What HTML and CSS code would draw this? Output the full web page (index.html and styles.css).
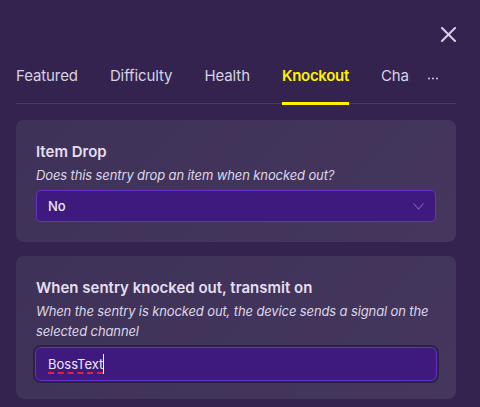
FILE: index.html
```html
<!DOCTYPE html>
<html>
<head>
<meta charset="utf-8">
<link rel="stylesheet" href="styles.css">
</head>
<body>
<div class="page">
  <div class="topbar">
    <svg class="close" width="15" height="15" viewBox="0 0 15 15"><path d="M1 1L14 14M14 1L1 14" stroke="#d6d0e2" stroke-width="2" stroke-linecap="square"/></svg>
  </div>
  <div class="tabbar">
    <div class="tabs">
      <div class="tab">Featured</div>
      <div class="tab">Difficulty</div>
      <div class="tab">Health</div>
      <div class="tab active">Knockout</div>
      <div class="tab">Channels</div>
    </div>
    <div class="more">
      <svg width="10" height="3" viewBox="0 0 10 3"><circle cx="1" cy="1.5" r="1" fill="#d6d0e2"/><circle cx="5" cy="1.5" r="1" fill="#d6d0e2"/><circle cx="9" cy="1.5" r="1" fill="#d6d0e2"/></svg>
    </div>
  </div>
  <div class="card first">
    <div class="title">Item Drop</div>
    <div class="desc">Does this sentry drop an item when knocked out?</div>
    <div class="select">
      <span>No</span>
      <svg width="11" height="7" viewBox="0 0 11 7"><path d="M0.5 0.5L5.5 6L10.5 0.5" fill="none" stroke="#7d5fb5" stroke-width="1.1"/></svg>
    </div>
  </div>
  <div class="card second">
    <div class="title">When sentry knocked out, transmit on</div>
    <div class="desc">When the sentry is knocked out, the device sends a signal on the selected channel</div>
    <div class="input"><span class="typed">BossText</span><span class="caret"></span></div>
  </div>
</div>
</body>
</html>
```
FILE: styles.css
```css
* { box-sizing: border-box; }
html, body { margin: 0; padding: 0; }
body {
  background: #33234e;
  font-family: Inter, "Noto Sans", sans-serif;
  width: 480px;
  height: 407px;
  overflow: hidden;
}
.page { padding: 0 24px 0 16px; }
.topbar {
  display: flex;
  justify-content: flex-end;
  padding-top: 27px;
  height: 42px;
}
.close { display: block; }
.tabbar {
  margin-top: 24px;
  display: flex;
  align-items: flex-start;
  border-bottom: 1px solid #4d2ca6;
  height: 38px;
}
.tabs {
  display: flex;
  gap: 32px;
  width: 394px;
  overflow: hidden;
  white-space: nowrap;
}
.tab {
  font-size: 15px;
  line-height: 20px;
  color: #d8d2e5;
  font-weight: 400;
  letter-spacing: -0.1px;
  height: 38px;
  flex: none;
}
.tab.active {
  color: #fff200;
  font-weight: 600;
  letter-spacing: -0.3px;
  border-bottom: 3px solid #fff200;
  height: 39px;
}
.more {
  margin-left: 18px;
  padding-top: 8px;
  line-height: 0;
}
.card {
  background: linear-gradient(135deg, #3f3258 0%, #44365c 100%);
  border-radius: 8px;
  padding: 22px 20px 20px 20px;
}
.card.first { margin-top: 16px; }
.card.second { margin-top: 14px; padding-bottom: 18px; }
.title {
  font-size: 15px;
  line-height: 20px;
  font-weight: 600;
  color: #e4dff0;
}
.desc {
  font-size: 13px;
  letter-spacing: -0.12px;
  line-height: 20px;
  font-style: italic;
  color: #ddd6ea;
  margin-top: 3px;
}
.select {
  margin-top: 5px;
  height: 32px;
  width: 400px;
  background: #3e1a7f;
  border: 1px solid #6531c9;
  border-radius: 5px;
  display: flex;
  align-items: center;
  justify-content: space-between;
  padding: 0 11px 0 11px;
  font-size: 13px;
  color: #ece8f5;
  font-weight: 500;
}
.input {
  margin-top: 6px;
  margin-left: -1px;
  height: 34px;
  width: 402px;
  background: #3e1a7f;
  border: 1px solid #6531c9;
  box-shadow: 0 0 0 2px #2a2242;
  border-radius: 6px;
  display: flex;
  align-items: center;
  padding-left: 12px;
  font-size: 13px;
  color: #ece8f5;
  font-weight: 400;
}
.typed {
  text-decoration: underline dashed #e2213a;
  text-decoration-thickness: 1.5px;
  text-underline-offset: 3px;
}
.caret {
  display: inline-block;
  width: 1px;
  height: 20px;
  background: #ffffff;
}
```
